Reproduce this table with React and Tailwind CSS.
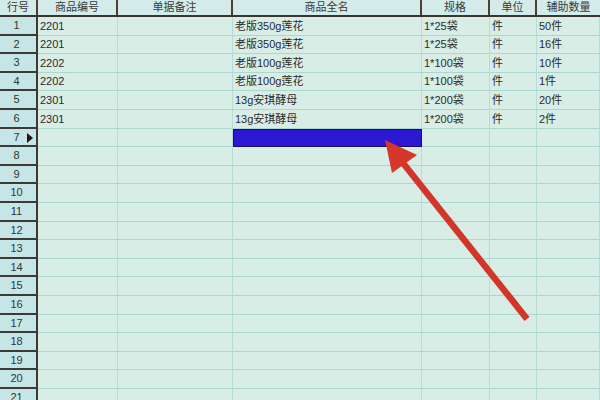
import React from "react";

const widths = ["w-[38px]", "w-[80px]", "w-[115px]", "w-[189px]", "w-[68px]", "w-[47px]", "w-[63px]"];
const headers = ["行号", "商品编号", "单据备注", "商品全名", "规格", "单位", "辅助数量"];
const data = [
  ["2201", "", "老版350g莲花", "1*25袋", "件", "50件"],
  ["2201", "", "老版350g莲花", "1*25袋", "件", "16件"],
  ["2202", "", "老版100g莲花", "1*100袋", "件", "10件"],
  ["2202", "", "老版100g莲花", "1*100袋", "件", "1件"],
  ["2301", "", "13g安琪酵母", "1*200袋", "件", "20件"],
  ["2301", "", "13g安琪酵母", "1*200袋", "件", "2件"],
];

export default function App() {
  const rows = [];
  for (let i = 1; i <= 21; i++) rows.push(i);
  return (
    <div
      className="relative w-[600px] h-[400px] overflow-hidden bg-[#d9ede7] text-[11px] text-[#2a2a2a]"
      style={{ fontFamily: '"Liberation Sans", "Noto Sans CJK SC", sans-serif' }}
    >
      <div className="flex h-[17px] bg-[#d3ebe9] border-b-2 border-[#3b3530]">
        {headers.map((h, i) => (
          <div
            key={i}
            className={`${widths[i]} shrink-0 flex items-center justify-center text-[#3a3a3a] ${i < 6 ? "border-r-2 border-[#4e4032]" : ""}`}
          >
            {h}
          </div>
        ))}
      </div>
      {rows.map((n) => {
        const d = data[n - 1];
        return (
          <div key={n} className="flex h-[18.6px]">
            <div className="w-[38px] shrink-0 relative flex items-center justify-center bg-[#c5e5e7] border-b-2 border-[#3d3a36] border-r-2 border-r-[#3d3a36] text-[#333]">
              <span className="pr-[3px]">{n}</span>
              {n === 7 && (
                <span className="absolute right-[3px] top-[4px] w-0 h-0 border-y-[5px] border-y-transparent border-l-[6px] border-l-[#2a1010]" />
              )}
            </div>
            {[0, 1, 2, 3, 4, 5].map((c) => {
              const selected = n === 7 && c === 2;
              return (
                <div
                  key={c}
                  className={`${widths[c + 1]} shrink-0 flex items-center pl-[2px] whitespace-nowrap overflow-hidden ${
                    selected
                      ? "bg-[#2c17d2] border border-[#1b1060]"
                      : "border-b border-[#abd8cd] border-r border-r-[#b6ddd3]"
                  }`}
                >
                  {d ? d[c] : ""}
                </div>
              );
            })}
          </div>
        );
      })}
      <svg className="absolute left-0 top-0" width="600" height="400" viewBox="0 0 600 400">
        <line x1="527" y1="319" x2="403" y2="163" stroke="#d2352a" strokeWidth="6.5" />
        <polygon points="385,140 417,155 392,173" fill="#d6372b" />
      </svg>
    </div>
  );
}
